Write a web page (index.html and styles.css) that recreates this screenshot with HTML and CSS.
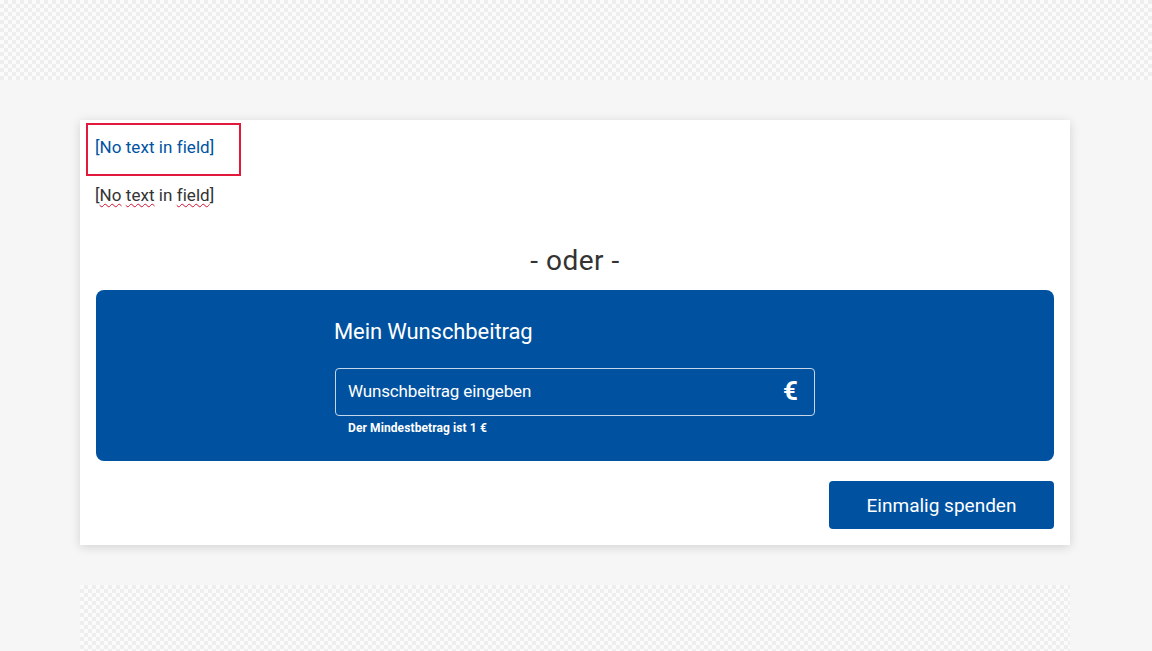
FILE: index.html
```html
<!DOCTYPE html>
<html lang="de">
<head>
    <meta charset="UTF-8">
    <meta name="viewport" content="width=device-width, initial-scale=1.0">
    <title>Spenden</title>
    <link rel="stylesheet" href="styles.css">
</head>
<body>
    <div class="placeholder-top"></div>
    <main class="content">
        <section class="donation-card">
            <a href="#" class="field-link">[No text in field]</a>
            <p class="field-text">[<span class="spell">No</span> <span class="spell">text</span> in <span class="spell">field</span>]</p>
            <h2 class="divider">- oder -</h2>
            <form class="amount-panel">
                <div class="amount-inner">
                    <h3>Mein Wunschbeitrag</h3>
                    <div class="amount-input">
                        <span class="amount-label">Wunschbeitrag eingeben</span>
                        <span class="currency">€</span>
                    </div>
                    <p class="amount-hint">Der Mindestbetrag ist 1 €</p>
                </div>
            </form>
            <div class="actions">
                <button type="button" class="donate-button">Einmalig spenden</button>
            </div>
        </section>
        <div class="placeholder-bottom"></div>
    </main>
</body>
</html>
```

FILE: styles.css
```css
* {
    margin: 0;
    padding: 0;
    box-sizing: border-box;
    font-family: 'Roboto', 'Lato', sans-serif;
    font-variant-ligatures: none;
}

body {
    background-color: #f6f6f6;
    color: #333;
    height: 651px;
    overflow: hidden;
}

.placeholder-top,
.placeholder-bottom {
    background-color: #fbfbfb;
    background-image: repeating-conic-gradient(#eeeeee 0 25%, #fbfbfb 0 50%);
    background-size: 8px 8px;
}

.placeholder-top {
    height: 80px;
}

.content {
    padding: 40px 82px 0 80px;
}

.donation-card {
    background-color: white;
    height: 425px;
    padding: 3px 16px 16px;
    box-shadow: 0 2px 10px rgba(0, 0, 0, 0.15);
}

.field-link {
    display: block;
    width: 155px;
    height: 53px;
    margin-left: -10px;
    padding: 11px 0 0 7px;
    border: 2px solid #e2183c;
    color: #0053a1;
    font-size: 17px;
    line-height: 22px;
    text-decoration: none;
    letter-spacing: 0.05px;
}

.field-text {
    margin: 8px 0 0 -1px;
    font-size: 17px;
    line-height: 22px;
    letter-spacing: 0.05px;
}

.spell {
    text-decoration: underline wavy #d01030 1px;
    text-underline-offset: 2px;
}

.divider {
    margin-top: 36px;
    text-align: center;
    font-size: 28px;
    font-weight: 400;
    line-height: 38px;
    letter-spacing: 0.5px;
}

.amount-panel {
    display: flex;
    justify-content: center;
    height: 171px;
    margin-top: 10px;
    background-color: #00519f;
    border-radius: 8px;
}

.amount-inner {
    width: 480px;
    padding-top: 28px;
    color: white;
}

.amount-inner h3 {
    margin-left: -1px;
    font-size: 22px;
    font-weight: 400;
    line-height: 28px;
    letter-spacing: -0.1px;
}

.amount-input {
    display: flex;
    justify-content: space-between;
    align-items: center;
    height: 48px;
    margin-top: 22px;
    padding: 0 16px 2px 12px;
    border: 1px solid #c5d6e8;
    border-radius: 4px;
    font-size: 17px;
}

.amount-label {
    letter-spacing: -0.15px;
}

.currency {
    font-size: 26px;
    font-weight: 700;
}

.amount-hint {
    margin-top: 4px;
    padding-left: 13px;
    font-size: 12px;
    font-weight: 700;
    line-height: 16px;
    letter-spacing: 0.1px;
}

.actions {
    display: flex;
    justify-content: flex-end;
    margin-top: 20px;
}

.donate-button {
    width: 225px;
    height: 48px;
    background-color: #00519f;
    color: white;
    border: none;
    border-radius: 4px;
    font-size: 19px;
    cursor: pointer;
}

.placeholder-bottom {
    height: 66px;
    margin-top: 40px;
}
```
